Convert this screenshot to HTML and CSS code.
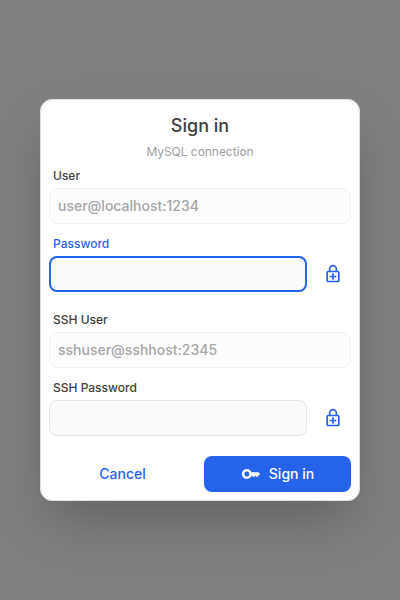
FILE: index.html
```html
<!DOCTYPE html>
<html lang="en">
<head>
<meta charset="utf-8">
<title>Sign in</title>
<link rel="stylesheet" href="styles.css">
</head>
<body>
<form class="dialog">
  <h1 class="title">Sign in</h1>
  <p class="subtitle">MySQL connection</p>
  <label class="label" for="user">User</label>
  <div class="row"><input class="input" id="user" value="user@localhost:1234" disabled></div>
  <label class="label active" for="password">Password</label>
  <div class="row last">
    <input class="input focused" id="password" type="password">
    <button class="icon-button" type="button" aria-label="Save password">
      <svg viewBox="0 0 24 24" width="20" height="20" fill="currentColor"><path d="M18 8h-1V6c0-2.76-2.24-5-5-5S7 3.24 7 6v2H6c-1.1 0-2 .9-2 2v10c0 1.1.9 2 2 2h12c1.1 0 2-.9 2-2V10c0-1.1-.9-2-2-2zM8.9 6c0-1.71 1.39-3.1 3.1-3.1s3.1 1.39 3.1 3.1v2H8.9V6zM18 20H6V10h12v10zm-7-1h2v-3h3v-2h-3v-3h-2v3H8v2h3z"/></svg>
    </button>
  </div>
  <label class="label" for="ssh-user">SSH User</label>
  <div class="row"><input class="input" id="ssh-user" value="sshuser@sshhost:2345" disabled></div>
  <label class="label" for="ssh-password">SSH Password</label>
  <div class="row last">
    <input class="input" id="ssh-password" type="password">
    <button class="icon-button" type="button" aria-label="Save SSH password">
      <svg viewBox="0 0 24 24" width="20" height="20" fill="currentColor"><path d="M18 8h-1V6c0-2.76-2.24-5-5-5S7 3.24 7 6v2H6c-1.1 0-2 .9-2 2v10c0 1.1.9 2 2 2h12c1.1 0 2-.9 2-2V10c0-1.1-.9-2-2-2zM8.9 6c0-1.71 1.39-3.1 3.1-3.1s3.1 1.39 3.1 3.1v2H8.9V6zM18 20H6V10h12v10zm-7-1h2v-3h3v-2h-3v-3h-2v3H8v2h3z"/></svg>
    </button>
  </div>
  <div class="actions">
    <button class="button" type="button"><span class="caption">Cancel</span></button>
    <button class="button primary" type="button">
      <svg viewBox="0 0 24 24" width="20" height="20" fill="currentColor"><path fill-rule="evenodd" d="M7 18q-2.5 0-4.25-1.75T1 12t1.75-4.25T7 6q2 0 3.5 1.1T12.65 10H20.5q.5 0 .8.3l1.2 1.2q.4.5 0 1l-2.7 2.7q-.7.6-1.4 0L17 14l-1.3 1.2q-.7.5-1.3 0L13 14h-.35q-.6 1.8-2.1 2.9T7 18zM7 15a3 3 0 1 0 0-6a3 3 0 0 0 0 6z"/></svg>
      <span class="caption">Sign in</span>
    </button>
  </div>
</form>
</body>
</html>
```

FILE: styles.css
```css
* { box-sizing: border-box; }
body {
  margin: 0;
  height: 600px;
  display: flex;
  align-items: center;
  justify-content: center;
  background: #7f7f7f;
  font-family: Inter, sans-serif;
  font-weight: 500;
}
.dialog {
  width: 320px;
  height: 402px;
  padding: 8px;
  border: 1px solid #e0e0e0;
  border-radius: 12px;
  background: #fff;
  box-shadow: 0 25px 50px -12px rgba(0, 0, 0, .25);
  color: #404040;
}
.title {
  margin: 4px 0 0;
  font-size: 18px;
  line-height: 28px;
  font-weight: 500;
  text-align: center;
}
.subtitle {
  margin: 4px 0 0;
  font-size: 12px;
  line-height: 16px;
  font-weight: 400;
  text-align: center;
  letter-spacing: -.04px;
  color: #a0a0a0;
}
.label {
  display: block;
  padding: 0 4px;
  margin: 8px 0 4px;
  font-size: 12px;
  line-height: 16px;
}
.active { color: #2563eb; }
.row {
  display: flex;
  gap: 8px;
  margin-bottom: 12px;
}
.row.last { margin-bottom: 20px; }
.input {
  flex: 1;
  min-width: 0;
  height: 36px;
  padding: 0 8px 2px;
  border: 1px solid #e5e5e5;
  border-radius: 8px;
  background: #fafafa;
  font: 500 14px Inter, sans-serif;
  color: #404040;
}
.input:disabled {
  border-color: #f1f1f1;
  background: #fcfcfc;
  color: #a6a6a6;
}
.focused { border: 2px solid #2563eb; }
.icon-button, .button {
  display: flex;
  align-items: center;
  justify-content: center;
  height: 36px;
  padding: 0;
  border: 0;
  background: none;
  color: #2563eb;
}
.icon-button { width: 36px; }
.actions {
  display: grid;
  grid-template-columns: 1fr 1fr;
  gap: 8px;
}
.button {
  gap: 8px;
  border-radius: 8px;
  font: 500 14px Inter, sans-serif;
}
.caption { padding-bottom: 2px; }
.primary {
  background: #2563eb;
  color: #fff;
}
```
